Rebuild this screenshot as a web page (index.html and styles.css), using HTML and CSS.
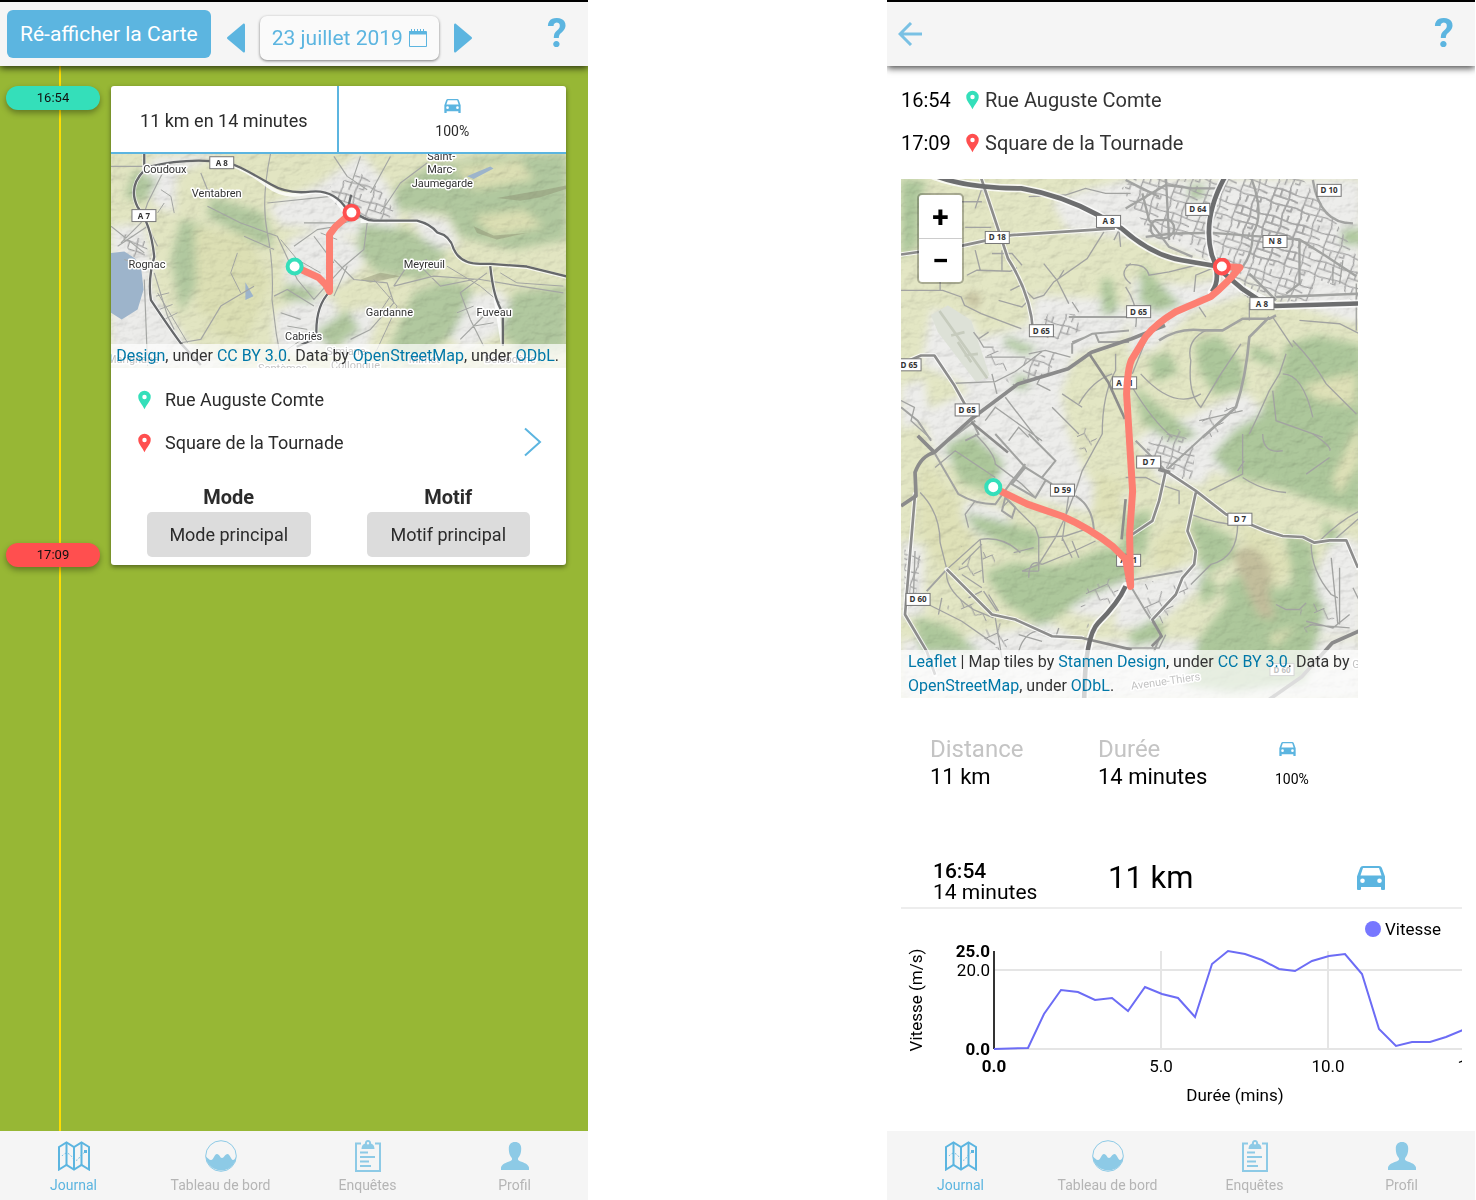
FILE: index.html
```html
<!DOCTYPE html>
<html lang="fr">
<head>
<meta charset="utf-8">
<meta name="viewport" content="width=device-width, initial-scale=1">
<title>Journal de déplacements</title>
<link rel="stylesheet" href="styles.css">
</head>
<body>
<svg class="defs" aria-hidden="true">
  <defs>
    <symbol id="i-car" viewBox="0 0 28 24"><path fill="currentColor" fill-rule="evenodd" d="M6 0h16c1.400 0 2.400.7 2.900 2L28 10.500V23q0 1-1 1h-2q-1 0-1-1v-2H4v2q0 1-1 1H1q-1 0-1-1V10.500L3.100 2C3.600.7 4.600 0 6 0ZM6 2 3.500 9.500h21L22 2ZM5.500 12.500a2.300 2.300 0 1 0 0 4.600 2.300 2.300 0 0 0 0-4.600Zm17 0a2.300 2.300 0 1 0 0 4.600 2.300 2.300 0 0 0 0-4.600Z"/></symbol>
    <symbol id="i-pin" viewBox="0 0 14 20"><path fill="currentColor" fill-rule="evenodd" d="M7 0a6.700 6.700 0 0 1 6.700 6.700C13.700 11 9.500 14.500 7 20 4.500 14.500.3 11 .3 6.700A6.700 6.700 0 0 1 7 0Zm0 4.300a2.400 2.400 0 1 0 0 4.800 2.400 2.400 0 0 0 0-4.800Z"/></symbol>
    <symbol id="i-map" viewBox="0 0 32 30"><g fill="none" stroke="currentColor" stroke-width="2"><path d="M1 6 8.500 1.500 16 6l7.500-4.500L31 6v22.500L23.500 24 16 28.500 8.500 24 1 28.500Z"/><path d="M8.500 1.500V24M16 6v22.500M23.500 1.500V24"/><path stroke-width="1" stroke-dasharray="1.500 2" d="M4 15q5-6 10 1t8-1l5-4"/></g><path fill="currentColor" d="M26 9h3v3h-3z"/></symbol>
    <symbol id="i-wave" viewBox="0 0 32 32"><circle cx="16" cy="16" r="15.300" fill="none" stroke="currentColor"/><path fill="currentColor" d="M.7 16.500C3 18 4 20 6 20c3 0 3-6 6-6 2.500 0 3 4 5 4s3-4 5.500-4C25 14 26 20 28 20c1.500 0 2-2 3.300-3A15.400 15.400 0 0 1 .7 16.500Z"/></symbol>
    <symbol id="i-clip" viewBox="0 0 26 32"><path fill="none" stroke="currentColor" stroke-width="2" d="M6 3.500H1V31h24V3.500h-5"/><path fill="currentColor" fill-rule="evenodd" d="M13 0a3 3 0 0 1 3 3.500c2 .5 3.500 2.500 3.500 5.500h-13c0-3 1.500-5 3.500-5.500A3 3 0 0 1 13 0Zm0 2a1.200 1.200 0 1 0 0 2.400A1.200 1.200 0 0 0 13 2Z"/><path stroke="currentColor" stroke-width="2" d="M5 12.500h8M5 17h15M5 21.500h9M5 26h11"/></symbol>
    <symbol id="i-user" viewBox="0 0 28 28"><path fill="currentColor" d="M14 0c4 0 6.200 2.500 6.200 6.500 0 5-1.200 7-3 9.500-.7 1.500 0 2.500 1.800 3.200 4 1.500 8 2.500 9 6.300V28H0v-2.500c1-3.800 5-4.800 9-6.300 1.800-.7 2.500-1.700 1.800-3.200-1.800-2.500-3-4.500-3-9.500C7.800 2.500 10 0 14 0Z"/></symbol>
    <symbol id="i-cal" viewBox="0 0 18 18"><path fill="none" stroke="currentColor" d="M.5 2.500h17v15H.5Z"/><path fill="currentColor" d="M0 2h2V0h1v2h2V0h1v2h2V0h1v2h2V0h1v2h2V0h1v2h2v3.500H0Z"/></symbol>

    <filter id="soft" x="-10%" y="-10%" width="120%" height="120%"><feGaussianBlur stdDeviation="13"/></filter>
    <filter id="relief" x="0" y="0" width="100%" height="100%">
      <feTurbulence type="fractalNoise" baseFrequency="0.022 0.034" numOctaves="5" seed="8"/>
      <feDiffuseLighting surfaceScale="9" diffuseConstant="1.1" lighting-color="#fff"><feDistantLight azimuth="225" elevation="58"/></feDiffuseLighting>
    </filter>
    <pattern id="streets" width="96" height="84" patternUnits="userSpaceOnUse" patternTransform="rotate(18)">
      <path fill="none" stroke="#a3a3a3" stroke-width="4" d="M0 20 40 14 96 20M0 56l30 6 66-6M22 0l-4 58 6 26M62 0l6 40-6 44M18 38h46M68 36l28 4M40 14v24M44 60l-2 24M82 0v18M84 57v14H70"/>
    </pattern>
    <pattern id="lanes" width="120" height="110" patternUnits="userSpaceOnUse" patternTransform="rotate(-24)">
      <path fill="none" stroke="#a0a0a0" stroke-width="3" d="M0 40h70l20-24M30 40v34l24 6M70 40l8 50M10 40V14M54 80v24M78 70h26M44 16v24"/>
    </pattern>
  </defs>
</svg>

<main class="screens">
  <section class="phone" aria-label="Journal du jour">
    <header class="topbar">
      <button class="reload" type="button">Ré-afficher la Carte</button>
      <div class="day">
        <button class="arrow" type="button" aria-label="Jour précédent"><svg width="18" height="30" viewBox="0 0 18 30"><path fill="currentColor" d="M16.500.5Q18 0 18 2v26q0 2-1.500 1.500L.5 16q-1-1 0-2Z"/></svg></button>
        <button class="date" type="button">23 juillet 2019<svg width="18" height="18"><use href="#i-cal"/></svg></button>
        <button class="arrow" type="button" aria-label="Jour suivant"><svg width="18" height="30" viewBox="0 0 18 30"><path fill="currentColor" d="M1.500.5Q0 0 0 2v26q0 2 1.500 1.500l16-13.500q1-1 0-2Z"/></svg></button>
      </div>
      <button class="help" type="button" aria-label="Aide">?</button>
    </header>

    <div class="feed">
      <div class="trip">
        <div class="times"><time class="pill start">16:54</time><time class="pill end">17:09</time></div>
        <article class="card">
          <div class="summary">
            <p class="distance">11 km en 14 minutes</p>
            <div class="share"><svg width="17" height="14"><use href="#i-car"/></svg><span>100%</span></div>
          </div>
          <div class="map small">
            <svg class="canvas" viewBox="0 0 456 215" preserveAspectRatio="xMidYMid slice" role="img" aria-label="Carte du trajet">
              <rect width="456" height="215" fill="#e2e5c2"/>
              <g transform="translate(-10 -74) scale(.3334)">
                <g filter="url(#soft)">
                  <path fill="#ececea" d="M30 440 130 430 160 560 150 620 260 790 400 870 30 870ZM160 230l220-10-150 60-10 120-60-20-30-100ZM660 310l120-90 80 90 40 100-30 70-110-10-100-20-120-10-40-60ZM560 480l120-40 100 60 10 60-60 50-120 40-60-40ZM520 700l120-60 60 20 40 120-140 60-80-40ZM1060 660l140-30 60 90-160 100-70-60ZM720 700l120-20-50 170h-60ZM920 400l120 20 40 80-90 10Z"/>
                  <path fill="#b1c89f" d="M880 330 980 260 1160 230 1400 220V480l-160 30-160-40-40-70-150-10ZM780 430l140 20 120 70-60 80-150-20-60-70ZM940 640l100-40 80 30-60 130-120 100-80-40ZM1240 640l160-20v190l-140 10-60-60ZM330 350l160 50 30 100-60-10-140-80ZM100 270l70 30-40 70-60-20ZM240 420l80 20-20 160-60 100-30-160ZM560 610l100 20-30 40-90-10ZM640 760l100-70 40 60-80 60Z"/>
                  <path fill="#dcdfb4" d="M280 440l160 30 70 140-60 110-160-20ZM400 600l90 60-60 130-110-40ZM1120 410l150-20 60 50-150 30ZM1060 260l200-20 40 60-180 30Z"/>
                </g>
                <rect x="30" y="220" width="1370" height="650" filter="url(#relief)" opacity=".3" class="multiply"/>
                <path fill="#9db4cb" d="M30 520 70 516 100 535 120 560 128 630 110 690 62 720 30 700ZM434 608l10 18 14 24-24 12ZM1100 290l70-30 10 6-60 32Z"/>
                <path fill="#8b8d72" opacity=".45" d="M1190 355l80-14 60-10 70-14v10l-80 26-60 10ZM1120 440l60 28 100-8-90 20-60-20ZM780 600l60-20 60 10-90 20Z"/>
                <path fill="url(#streets)" d="M690 320l90-40 60 50 40 60-20 40-90-10-70-50ZM60 460l70 20 20 60-60-10Z"/>
                <g fill="none" stroke="#a4a6a3" stroke-width="3.500" stroke-linejoin="round">
                  <path d="M30 260h110M510 220q-30 140-10 240 20 100 14 200 10 100 30 200M320 380l100 50 110 40 60 130 50 60 90-100 60-50 10-80M700 230l40 60 60 40M780 230l-30 90M870 230l-60 110M840 400l60-90 80-60M460 620l-100 60-60 100-60 10M520 650l40-20 80 50M580 500l70-50 60-10M610 430h120l60-20M200 250l-60 120-20 60-60 60M50 500l90-60 30 60M30 440l100 80M160 580l40 130 20 40M300 280l20 50 80 20M700 540l60 60 100 10 20 60-70 80-60 30M880 620l120-30 140 10 120 20 130 20M960 560l60 60 100-20M880 620l40-60 60-20M1110 720l-30-80 80-60M1110 720l40 80M1080 780l80-80 60-10M740 560l-40 90M500 370l190-20M430 470l90 40M640 470l60 80M540 700l60 20M130 600l10 260"/>
                  <path stroke-width="3" d="M540 480l50 60 70 40M660 460l50 20M820 600l70 80-60 130-30 40M1200 580l50 30 140 10M1040 560l100 60 60 50M170 640l60 100 30 50M560 810l60-40M180 330l30 20 10 50M190 370l-20 30M165 650l40-10M175 690l40-15M190 720l40-20M70 540l60 20M1070 700l50-20M1120 740l60-10M870 650l-40 60M410 520l-20 60 30 60M560 740l60 10"/>
                </g>
                <path fill="none" stroke="#fff" stroke-width="11" opacity=".8" stroke-linejoin="round" d="M400 258q50 20 100 60t120 22 110 55l30 5M130 222v50q-50 50-20 110 40 50 50 150-20 70-10 130 60 90 90 130M780 425h170q40 10 60 35 40 10 50 50 20 45 80 45l30 0 110 8 120 30M1170 560l38 240M688 636q-46 46-40 140"/>
                <path fill="none" stroke="#66686a" stroke-width="7" stroke-linejoin="round" d="M130 222v50q-50 50-20 110 40 50 50 150-20 70-10 130 60 90 90 130l60 65M140 262q100-24 190-18 50 0 90 20 40 20 90 50t120 22 110 55l20 2q30 30 60 30h130q40 10 60 35 40 10 50 50 20 45 80 45l30 0 110 8 120 30M1170 560q10 100 38 140v100M688 636q-46 46-40 140l-60 26M752 345l-12 50"/>
              </g>
              <g class="places" text-anchor="middle">
                <text x="54" y="19">Coudoux</text><text x="106" y="43">Ventabren</text><text x="331" y="6">Saint-</text><text x="331" y="19">Marc-</text><text x="332" y="33">Jaumegarde</text><text x="36" y="115">Rognac</text><text x="314" y="115">Meyreuil</text><text x="279" y="163">Gardanne</text><text x="384" y="163">Fuveau</text><text x="193" y="187">Cabriès</text><text x="22" y="210">Marignane</text><text x="172" y="219">Septèmes</text><text x="237" y="202">Simiane-</text><text x="245" y="216">Collongue</text><text x="314" y="210">Mimet</text><text x="400" y="210">Belcodène</text>
              </g>
              <g class="shields" text-anchor="middle">
                <g transform="translate(111 9)"><rect x="-12" y="-6" width="24" height="12"/><text y="3">A 8</text></g>
                <g transform="translate(33 62)"><rect x="-12" y="-6" width="24" height="12"/><text y="3">A 7</text></g>
              </g>
              <path class="route" d="M184 113 208 124 215 131 219 138V81L225 73 241 59"/>
              <circle class="dot from" cx="184" cy="113" r="7"/><circle class="dot to" cx="241" cy="59" r="7"/>
            </svg>
            <p class="credit"><a href="#leaflet">Leaflet</a> | Map tiles by <a href="#stamen">Stamen Design</a>, under <a href="#cc">CC BY 3.0</a>. Data by <a href="#osm">OpenStreetMap</a>, under <a href="#odbl">ODbL</a>.</p>
          </div>
          <div class="ends">
            <ul class="places-list">
              <li><svg class="from" width="13" height="20"><use href="#i-pin"/></svg>Rue Auguste Comte</li>
              <li><svg class="to" width="13" height="20"><use href="#i-pin"/></svg>Square de la Tournade</li>
            </ul>
            <a class="more" href="#detail" aria-label="Voir le détail"><svg width="18" height="30" viewBox="0 0 18 30"><path fill="none" stroke="currentColor" stroke-width="2" d="M1 1.500 16 15 1 28.500"/></svg></a>
          </div>
          <div class="tags">
            <div><h2>Mode</h2><button type="button">Mode principal</button></div>
            <div><h2>Motif</h2><button type="button">Motif principal</button></div>
          </div>
        </article>
      </div>
    </div>

    <nav class="tabs">
      <a class="active" href="#journal"><svg width="32" height="30"><use href="#i-map"/></svg>Journal</a>
      <a href="#tableau"><svg width="32" height="32"><use href="#i-wave"/></svg>Tableau de bord</a>
      <a href="#enquetes"><svg width="26" height="32"><use href="#i-clip"/></svg>Enquêtes</a>
      <a href="#profil"><svg width="28" height="28"><use href="#i-user"/></svg>Profil</a>
    </nav>
  </section>

  <section class="phone" id="detail" aria-label="Détail du trajet">
    <header class="topbar">
      <a class="back" href="#journal" aria-label="Retour"><svg width="24" height="24" viewBox="0 0 24 24"><path fill="none" stroke="currentColor" stroke-width="3" d="M13 1 2 12l11 11M2 12h22"/></svg></a>
      <button class="help" type="button" aria-label="Aide">?</button>
    </header>

    <div class="detail">
      <ul class="stops">
        <li><time>16:54</time><svg class="from" width="13" height="20"><use href="#i-pin"/></svg>Rue Auguste Comte</li>
        <li><time>17:09</time><svg class="to" width="13" height="20"><use href="#i-pin"/></svg>Square de la Tournade</li>
      </ul>

      <div class="map large">
        <svg class="canvas" viewBox="0 0 456 519" preserveAspectRatio="xMidYMid slice" role="img" aria-label="Carte détaillée du trajet">
          <rect width="456" height="519" fill="#e3e6c4"/>
          <g transform="scale(.3334)">
            <g filter="url(#soft)">
              <path fill="#ededeb" d="M450 70 560 30 690 0H1380V440L1150 370 1000 340 1080 330 930 260 760 190 620 170 500 160ZM400 350 620 360 690 400 660 480 520 530 480 640 500 760 560 900 700 960 560 1000 380 950 230 900 100 830 60 700 200 640 150 560 220 480 380 440ZM90 390 210 420 270 600 200 620 60 560ZM690 300l160 20 140-30 60 50-180 60-110 110-80 20ZM880 700l150-60 60 60-20 120-100 70-130-60ZM700 780l120-60 130-20 10 130-60 90-130-20ZM640 1210l150-30 130-40-20 80-140 120-120 10ZM480 1240l90-50 90 40-50 90-100-20ZM200 960l110 30 40 80-100 10-80-60ZM1210 1240l90-180 80 30v280h-190ZM0 1380h1380v180H0ZM0 620l70-20 20 130-90 20ZM200 1370l250-40 180 120H160ZM0 1080l70 20v200l-70 20Z"/>
              <path fill="#adc79b" d="M0 0 80 10 60 50 50 200 0 240ZM720 260l60 60 60 60-70 20-60-30ZM860 20h50v40h-50ZM600 300l30 0 20 100-50 10ZM880 490 950 470l70 80 10 80-90 20-50-80ZM740 540l60-20 30 60-70 30ZM1040 500l70 20 20 50-80-30ZM1150 500 1240 470 1380 500V1000l-100-20-160-60-130-30-60-60 70-80 70-40 60-110ZM700 620l70 60 120 90-80 20-90-60ZM1010 770l80 30-20 80-90-40ZM1320 150h60v50h-60ZM130 800l80-40 100 90-40 90-90-30ZM190 1000l90 20 140 40-10 60-80-10-110-60ZM250 1180 330 1150 480 1160 600 1110 680 1100 700 1190 560 1250 420 1340 310 1270ZM40 1310l100 30 100 80H60ZM860 1010l130 60 10 60-110 70 10 80 160-140 60 90 100-30 50 90-60 220-220 30-140-20 40-140 90-120-80-90ZM1150 1060l80 30 20 200-60 70ZM680 1360l90-50 20 70-100 20ZM310 470l100 40-40 20-60-30ZM340 590h40v40h-40ZM670 1010l80-20-20 140-70-20ZM1260 1010l60 70-50 20Z"/>
              <path fill="#dfe1b8" d="M760 1080l80-60 30 60-50 90-60 0ZM1020 1040l100 30 50 90-50 70-80-100ZM1200 620l160-40v100l-120-20ZM1290 900l80-170v120l-60 100ZM1100 1370l80-30-60 60ZM60 850l100 100 60 150-80 100-80-140ZM580 880l90 30-20 130-80-30Z"/>
              <path fill="#c3be9c" d="M990 1120l60-20 60 60-10 80 20 80-50-10-50-110ZM200 340l40 10-10 40-40-20Z"/>
            </g>
            <rect width="1380" height="1560" filter="url(#relief)" opacity=".3" class="multiply"/>
            <path fill="#dde1d7" d="M90 410 140 380 210 425 265 590 225 610 110 460Z"/>
            <path fill="none" stroke="#c6cbbd" stroke-width="8" d="M115 397 258 598M170 490l40 60M150 470l40-10M190 530l40-5"/>
            <path fill="url(#streets)" d="M700 0h500l100 130 80 130v150l-60-80-80-30-20 80-180-20-60-50-60-50-50-60-130-40-80-130Z"/>
            <path fill="url(#streets)" d="M1000 60l160-40 70 100-60 140-120-20-40-80ZM440 405l80 0 20 50-80 30-60-20ZM365 540l100-20-20 70-80 20ZM740 790l90-40 50 60-10 100-80-30-60-50ZM10 1110l50 20-20 150H10Z"/>
            <path fill="url(#lanes)" d="M690 1230l150-60 20 60-80 110-60-60ZM530 1240l110-50 20 80-110 80ZM180 1100l110 30-30 60-90 0ZM120 1240l180 60 40 150-200-160ZM890 700l120-20-30 60-60 40ZM520 740l80 20-60 80ZM240 490l60 30 40 100-60-30ZM1180 1250l70 20 60 60-100 30Z"/>

            <g transform="translate(-18 -15)" fill="none" stroke="#a2a3a1" stroke-width="4">
              <path d="M200 85h60M240 105l20-60 25 40M210 162h78M400 70l110-5 60-20 60 15h75M290 240h60l30 35M215 305l30-15 100 3 20-10M240 230l15 60M320 230v60M18 350h125l55 20 10 25 50 25 120 45M135 350v-60M345 350l30-15 40 40 30-10 30-40 100-70 50-80M445 270l40 50 35 70M505 290l-15 25M310 380l70 20 20-20M235 475l15 20 30-20M250 495l15 25h30M400 540l50-10 75 20M180 628l120-5 60-30 80-60M330 670l100 130M270 740l30-40 140 100M400 790l-30-30-30 40M290 600l15 60M270 550h120M560 700l-60-40M440 600l-15 30 40 20M620 780q0-120 40-190V540M550 690q40-70 100-90M470 700l80 80M705 270q-40 30 0 60M655 200l15-30 5 50M530 385l20 30M18 680l40 20-10 40 60 55"/>
              <path stroke-width="6" d="M18 700l50 40 40 60M160 800l80-60M230 740l20 40-40 20M520 430h175M530 540l0-30 60-30 110-10M600 480l10 25h90M530 505l40-15"/>
            </g>
            <g transform="translate(672 -15)" fill="none" stroke="#a2a3a1" stroke-width="4">
              <path d="M0 275q60-10 70 30l60-10 80-20M205 355l5-50 60-25M0 340q40 60 30 120M240 470q-60 30-45 90-10 100 30 140l60-100 60-90M45 600q100 110 180 60M20 640q60 100 120 150M220 740l130-30M240 430l-20-30M500 500q60 60 100 130l90 90M480 540l-20 60-30 50q-40 90-60 130M440 650l10 90 140 50M470 600q60 0 90 130M370 440v-50h80M440 430l60 90M700 480l-60-30-120-10M60 500l-40 100M620 280v50M650 260l-10 70M690 470V330"/>
              <path stroke-width="8" d="M100 500q60-40 130-30h60l60-35h80l20-10M430 430l-60 60q-10 120-40 210l-100 90"/>
              <path stroke-width="7" d="M0 105l120-70 80 10 90 0M60 190l80-10 120-2 260 20 80 50 90 60M370 0q50 120 10 180 0 60-30 100M560 20q20 130 120 130M450 370l250-10M120 0l10 200M0 20l100 50M90 140a35 30 0 1 0 40 0ZM50 60l20 80 60 80 70 30M370 300l80 80M520 200v130l-40 30"/>
            </g>
            <g transform="translate(-18 765)" fill="none" stroke="#a2a3a1" stroke-width="4">
              <path d="M240 0q60 60 60 90l80 60 40 40M120 100l60-50 120 80M520 180l-20 140M620 0l-60 110q-30 100-80 200l-50 80-50 20M75 175q60 60 60 150l20 80M155 405q-10 60 80 120l60 25M155 405l100-90q70-10 120 40M255 315l10 130M320 220l20-20 80 80 10 30v100M355 355l60-15M430 310l80-5 60-20M440 390q80-30 160-70M500 310l30 60M530 320l20 50M220 280l-10-40 30-40M100 510l100 50 100 70M300 550q10 60 20 120M370 650q20-70 80-60M370 600l70 20M480 610l10-30M60 350l-5 140M380 410h50M200 420l60 40M140 490l-10 50M260 330l-60 60M265 470l40 60M280 480l30 50M220 490l40-20M400 430q0-60 40-40"/>
              <path stroke-width="6" d="M155 405l-60 65M120 60l70 120q50 30 110 30l50-70 40-50M300 0l90 100 80 50M390 100l-40 50 70 40 30-50M400 0l80 80-40 50M330 190l30 30-10 30-30-20ZM540 185q50 30 55 100"/>
            </g>
            <g transform="translate(672 765)" fill="none" stroke="#a2a3a1" stroke-width="4">
              <path d="M160 210v-40l-60-20-40-20H0M350 0l0 120-60 30-40 20M410 0q0 60 60 50M355 80l-20 30M350 130q60 40 130 45M540 120l70-50M560 0q60 40 50 50M195 240q80 30 140 30 0 100-80 120l-60 60M555 330q0 80 60 150l20 10M615 370l20 200M640 400v170M680 460l20 40M580 320q60-60 120-90M620 320l80-70M450 510l30 15h40l20-20M540 560l80 20 50-40M550 570l120 10M120 600l-20 40H0"/>
              <path stroke-width="6" d="M0 430l60 100 45 70-20 50M0 440l170-30M120 110 240 0M30 20l90 90"/>
            </g>
            <g fill="none" stroke="#fff" opacity=".8" stroke-width="14" stroke-linejoin="round" stroke-linecap="round"><path stroke-width="24" d="M100-6Q200 30 360 30 480 50 590 110L660 150Q750 230 840 245L940 262 1020 330 1120 382 1380 374M970-6Q900 120 930 230 960 300 930 340M672 1220Q650 1270 590 1330 550 1370 548 1560"/><path d="M240 0Q280 120 320 240 390 350 395 460M0 228 180 202 330 170 640 150M0 555l60-25h40l60 90 50 90M210 155M792 875 882 935 972 1005 1092 1055 1142 1070 1202 1073 1237 1090 1282 1083 1332 1083 1367 1165M792 875 772 965 752 1025 692 1065M882 940 857 1055 882 1115 877 1155 842 1195 822 1245 752 1320M42 945 12 1305 77 1415 102 1485M137 1170 272 1305 342 1320 452 1370 542 1375"/></g>
            <path fill="none" stroke="#8d8d8c" stroke-width="8" stroke-linejoin="round" d="M240 0Q280 120 320 240 390 350 395 460M0 228 180 202 330 170 640 150M0 555l60-25h40l60 90 50 90M792 875 882 935 972 1005 1092 1055 1142 1070 1202 1073 1237 1090 1282 1083 1332 1083 1367 1165M792 875 772 965 752 1025 692 1065M882 940 857 1055 882 1115 877 1155 842 1195 822 1245 752 1320 780 1370 750 1400M42 945 12 1305 77 1415 102 1485M137 1170 272 1305 342 1320 452 1370 542 1375 690 1410M560 520l60 90 50 110M210 730l110 90M672 960 660 1080"/>
            <path fill="none" stroke="#8b8b8b" stroke-width="11" stroke-linejoin="round" d="M0 980 45 950 42 880Q60 830 100 820L210 720 350 615 500 570 570 520 690 480 790 440M100 820l-50-50M1380 1350l-90 40-90 100-100 70M770 870l35 10"/>
            <path fill="none" stroke="#6d6e6f" stroke-width="14" d="M100-8Q200 30 360 30 480 50 590 110L660 150Q750 230 840 245L940 262 1020 330 1080 370 1120 382 1380 374M970-6Q900 120 930 230 960 300 930 340M672 1220Q650 1270 590 1330 550 1370 548 1560"/>
          </g>
          <g class="shields" text-anchor="middle">
            <g transform="translate(207 43)"><rect x="-12" y="-6" width="24" height="12"/><text y="3">A 8</text></g>
            <g transform="translate(296 31)"><rect x="-12" y="-6" width="24" height="12"/><text y="3">D 64</text></g>
            <g transform="translate(427 12)"><rect x="-12" y="-6" width="24" height="12"/><text y="3">D 10</text></g>
            <g transform="translate(96 59)"><rect x="-12" y="-6" width="24" height="12"/><text y="3">D 18</text></g>
            <g transform="translate(373 63)"><rect x="-12" y="-6" width="24" height="12"/><text y="3">N 8</text></g>
            <g transform="translate(360 125)"><rect x="-12" y="-6" width="24" height="12"/><text y="3">A 8</text></g>
            <g transform="translate(237 133)"><rect x="-12" y="-6" width="24" height="12"/><text y="3">D 65</text></g>
            <g transform="translate(140 152)"><rect x="-12" y="-6" width="24" height="12"/><text y="3">D 65</text></g>
            <g transform="translate(8 186)"><rect x="-12" y="-6" width="24" height="12"/><text y="3">D 65</text></g>
            <g transform="translate(66 231)"><rect x="-12" y="-6" width="24" height="12"/><text y="3">D 65</text></g>
            <g transform="translate(223 204)"><rect x="-12" y="-6" width="24" height="12"/><text y="3">A 51</text></g>
            <g transform="translate(161 311)"><rect x="-12" y="-6" width="24" height="12"/><text y="3">D 59</text></g>
            <g transform="translate(247 283)"><rect x="-12" y="-6" width="24" height="12"/><text y="3">D 7</text></g>
            <g transform="translate(338 340)"><rect x="-12" y="-6" width="24" height="12"/><text y="3">D 7</text></g>
            <g transform="translate(17 420)"><rect x="-12" y="-6" width="24" height="12"/><text y="3">D 60</text></g>
            <g transform="translate(227 381)"><rect x="-12" y="-6" width="24" height="12"/><text y="3">A 51</text></g>
            <g transform="translate(380 490)"><rect x="-12" y="-6" width="24" height="12"/><text y="3">D 60</text></g>
          </g>
          <g class="places"><text transform="translate(230 510) rotate(-8)">Avenue-Thiers</text><text x="450" y="488">Gardanne</text></g>
          <path class="route" d="M91 308 126 325 161 337Q190 350 211 367L224 380 229 407 228 355 231 312 225 215Q226 190 230 181L244 158Q254 145 274 133L309 118Q325 105 338 89L320 88"/>
          <circle class="dot from" cx="92" cy="308" r="7"/><circle class="dot to" cx="320" cy="88" r="7"/>
        </svg>
        <div class="zoom"><button type="button" aria-label="Zoom avant">+</button><button type="button" aria-label="Zoom arrière">−</button></div>
        <p class="credit"><a href="#leaflet">Leaflet</a> | Map tiles by <a href="#stamen">Stamen Design</a>, under <a href="#cc">CC BY 3.0</a>. Data by <a href="#osm">OpenStreetMap</a>, under <a href="#odbl">ODbL</a>.</p>
      </div>

      <dl class="stats">
        <div><dt>Distance</dt><dd>11 km</dd></div>
        <div><dt>Durée</dt><dd>14 minutes</dd></div>
        <div class="mode"><dt><svg width="17" height="14" aria-label="Voiture"><use href="#i-car"/></svg></dt><dd>100%</dd></div>
      </dl>

      <div class="segment">
        <p class="when"><strong>16:54</strong><span>14 minutes</span></p>
        <p class="length">11 km</p>
        <svg width="28" height="24"><use href="#i-car"/></svg>
      </div>

      <svg class="chart" viewBox="0 0 561 200" preserveAspectRatio="xMinYMin meet" role="img" aria-label="Vitesse en fonction de la durée">
        <circle cx="472" cy="20" r="8" fill="#7777ff"/><text x="484" y="26">Vitesse</text>
        <path fill="none" stroke="#e5e5e5" stroke-width="2" d="M93 61H561M93 140H561M260 42V140M427 42V140"/>
        <path stroke="#333" stroke-width="2" d="M93 42V140"/>
        <path fill="none" stroke="#6c6cf5" stroke-width="2" d="M93 140 127 139 143 105 160 81 177 83 194 91 211 89 227 102 244 78 261 85 277 89 294 108 311 55 327 42 344 45 361 51 378 60 394 62 411 52 428 47 444 45 461 65 478 120 495 137 511 133 529 133 545 128 562 121"/>
        <g text-anchor="end"><text class="bold" x="89" y="48">25.0</text><text x="89" y="67">20.0</text><text class="bold" x="89" y="146">0.0</text></g>
        <g text-anchor="middle"><text class="bold" x="93" y="163">0.0</text><text x="260" y="163">5.0</text><text x="427" y="163">10.0</text><text x="573" y="163">15.0</text><text x="334" y="192">Durée (mins)</text><text transform="translate(21 91) rotate(-90)">Vitesse (m/s)</text></g>
      </svg>
    </div>

    <nav class="tabs">
      <a class="active" href="#journal"><svg width="32" height="30"><use href="#i-map"/></svg>Journal</a>
      <a href="#tableau"><svg width="32" height="32"><use href="#i-wave"/></svg>Tableau de bord</a>
      <a href="#enquetes"><svg width="26" height="32"><use href="#i-clip"/></svg>Enquêtes</a>
      <a href="#profil"><svg width="28" height="28"><use href="#i-user"/></svg>Profil</a>
    </nav>
  </section>
</main>
</body>
</html>
```

FILE: styles.css
```css
:root {
  --blue: #5cb5e0;
  --green: #97b735;
  --from: #34dfba;
  --to: #ff4f4f;
  --bar: #f5f5f5;
}

* { box-sizing: border-box; }

body {
  margin: 0;
  background: #fff;
  color: #2b2b2b;
  font-family: Roboto, "Liberation Sans", sans-serif;
  font-size: 18px;
}

p, h2, ul, dl, dd { margin: 0; padding: 0; }
ul { list-style: none; }
a { color: inherit; text-decoration: none; }
button {
  border: 0;
  padding: 0;
  background: none;
  color: inherit;
  font: inherit;
  cursor: pointer;
}
svg { display: block; flex: none; }
.defs { position: absolute; width: 0; height: 0; }
.from { color: var(--from); }
.to { color: var(--to); }

.screens {
  display: grid;
  grid-template-columns: 1fr 1fr;
  column-gap: 299px;
  min-height: 100vh;
  padding-right: 1px;
}
.phone { display: flex; flex-direction: column; min-width: 0; }

/* Top bar */
.topbar {
  position: relative;
  z-index: 1;
  display: flex;
  align-items: center;
  justify-content: space-between;
  height: 66px;
  padding: 0 21px 0 7px;
  border-top: 2px solid #000;
  background: var(--bar);
  box-shadow: 0 2px 7px rgba(0, 0, 0, .75);
  clip-path: inset(0 0 -16px 0);
  color: var(--blue);
}
.reload {
  height: 48px;
  padding: 0 13px;
  border-radius: 6px;
  background: var(--blue);
  color: #fff;
  font-size: 21px;
}
.day {
  display: flex;
  align-items: center;
  gap: 15px;
  margin: 8px auto 0 16px;
}
.date {
  display: flex;
  align-items: center;
  gap: 6px;
  height: 44px;
  padding: 0 12px;
  border-radius: 7px;
  background: #fafafa;
  box-shadow: 0 1px 3px rgba(0, 0, 0, .5);
  font-size: 21px;
}
.help { font-size: 40px; font-weight: 700; line-height: 60px; }
.back { padding-left: 4px; opacity: .8; }

/* Timeline */
.feed {
  flex: 1;
  padding: 20px 22px 20px 6px;
  background: linear-gradient(#ffdd00, #ffdd00) 59px 0 / 2px 100% no-repeat var(--green);
}
.trip { display: grid; grid-template-columns: 94px 1fr; column-gap: 11px; }
.times { display: flex; flex-direction: column; justify-content: space-between; }
.pill {
  border-radius: 12px;
  box-shadow: 0 3px 6px rgba(0, 0, 0, .35);
  color: #111;
  font-size: 13px;
  line-height: 24px;
  text-align: center;
}
.pill.start { background: #34dfba; }
.pill.end { margin-bottom: -2px; background: #ff4f4f; }

.card {
  min-width: 0;
  border-radius: 3px;
  background: #fff;
  box-shadow: 0 2px 5px rgba(0, 0, 0, .45);
}
.summary {
  display: grid;
  grid-template-columns: 1fr 1fr;
  height: 68px;
  border-bottom: 2px solid var(--blue);
  text-align: center;
}
.distance { height: 66px; border-right: 2px solid var(--blue); line-height: 70px; }
.share {
  display: flex;
  flex-direction: column;
  align-items: center;
  gap: 10px;
  padding-top: 13px;
  font-size: 14px;
  line-height: 16px;
}
.share svg { color: var(--blue); }

/* Maps */
.map { position: relative; overflow: hidden; }
.map.small { height: 214px; }
.map.large { width: 81.5%; height: 519px; }
.canvas { width: 100%; height: 100%; }
.multiply { mix-blend-mode: multiply; }
.places text {
  fill: #333;
  stroke: #fff;
  stroke-width: 3px;
  stroke-linejoin: round;
  paint-order: stroke;
  font: 11px Roboto, sans-serif;
}
.shields rect { fill: #fff; stroke: #777; }
.shields text { fill: #333; font: 700 8px "Noto Sans", sans-serif; }
.route {
  fill: none;
  stroke: #fd7f72;
  stroke-width: 7px;
  stroke-linecap: round;
  stroke-linejoin: round;
}
.dot { fill: #fff; stroke: currentColor; stroke-width: 4px; }
.credit {
  position: absolute;
  right: 0;
  bottom: 0;
  left: 0;
  padding: 0 7px;
  background: rgba(255, 255, 255, .7);
  color: #333;
  font-size: 16px;
  line-height: 24px;
}
.credit a { color: #0078a8; }
.small .credit { left: auto; white-space: nowrap; }
.zoom {
  position: absolute;
  top: 14px;
  left: 16px;
  width: 47px;
  border: 2px solid rgba(0, 0, 0, .25);
  border-radius: 5px;
  background: #fff;
  background-clip: padding-box;
}
.zoom button {
  display: block;
  width: 100%;
  height: 43px;
  color: #000;
  font-size: 30px;
  font-weight: 700;
  line-height: 40px;
}
.zoom button + button { height: 44px; border-top: 1px solid #ccc; }

/* Card body */
.ends {
  display: flex;
  align-items: flex-end;
  justify-content: space-between;
  padding: 10px 24px 0 27px;
}
.places-list li { display: flex; align-items: center; gap: 14px; height: 43px; }
.more { padding-bottom: 7px; color: var(--blue); }
.tags {
  display: grid;
  grid-template-columns: 1fr 1fr;
  gap: 56px;
  padding: 19px 36px 8px;
  text-align: center;
}
.tags h2 { margin-bottom: 1px; font-size: 20px; line-height: 28px; }
.tags button {
  width: 100%;
  height: 45px;
  border-radius: 5px;
  background: #dcdcdc;
}

/* Trip detail */
.detail { flex: 1; padding: 12px 13px 0 14px; color: #000; }
.stops { margin-bottom: 15px; font-size: 20px; }
.stops li { display: flex; align-items: center; height: 43px; gap: 6px; color: #333; }
.stops time { width: 59px; color: #000; }
.stats {
  display: grid;
  grid-template-columns: 168px 177px 1fr;
  padding: 37px 0 0 29px;
  font-size: 22px;
}
.stats dt { color: #c4c4c4; font-size: 24px; line-height: 28px; }
.stats dd { line-height: 28px; }
.stats .mode dt {
  display: flex;
  align-items: center;
  height: 28px;
  padding-left: 4px;
  color: var(--blue);
}
.stats .mode dd { font-size: 14px; line-height: 32px; }
.segment {
  display: grid;
  grid-template-columns: 175px 1fr auto;
  padding: 66px 77px 4px 32px;
  border-bottom: 2px solid #ededed;
}
.segment svg { margin-top: 5px; color: var(--blue); }
.when { display: grid; font-size: 21px; line-height: 21px; }
.when strong { font-weight: 500; }
.length { font-size: 31px; line-height: 34px; }
.chart { width: 100%; font-size: 17px; }
.chart .bold { font-weight: 700; }

/* Bottom tabs */
.tabs {
  display: grid;
  grid-template-columns: repeat(4, 1fr);
  height: 69px;
  background: var(--bar);
  color: #b5b5b5;
  font-size: 14px;
}
.tabs a {
  display: grid;
  grid-template-rows: 34px 24px;
  align-content: start;
  align-items: center;
  justify-items: center;
  padding-top: 8px;
}
.tabs svg { color: #8dcae6; }
.tabs .active, .tabs .active svg { color: var(--blue); }
```
